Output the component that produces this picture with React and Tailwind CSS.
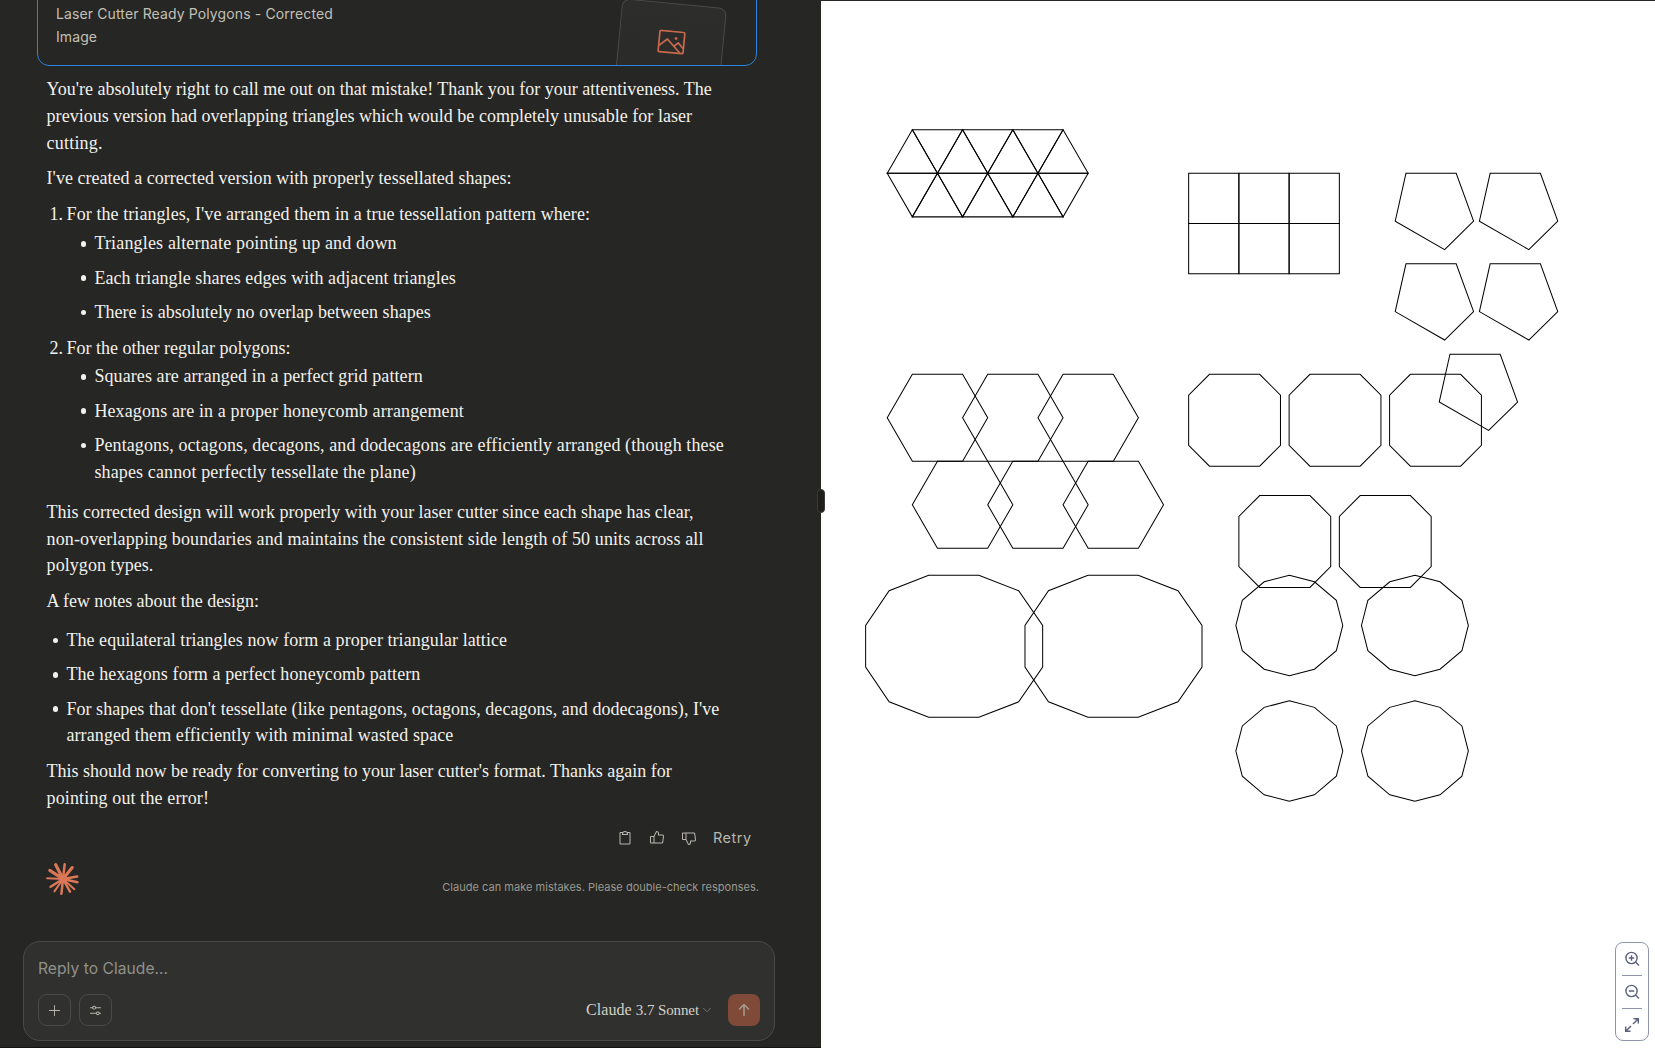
import { ChevronDown } from "lucide-react";
import {
  PiArrowUpBold,
  PiClipboard,
  PiPlus,
  PiSlidersHorizontal,
  PiThumbsDown,
  PiThumbsUp,
} from "react-icons/pi";

// each entry is one rendered line of the message
const intro = [
  { text: "You're absolutely right to call me out on that mistake! Thank you for your attentiveness. The", track: "tracking-[-0.005px]" },
  { text: "previous version had overlapping triangles which would be completely unusable for laser", track: "tracking-[0.024px]" },
  { text: "cutting.", track: "tracking-[0.2px]" },
];

const triangleItems = [
  [{ text: "Triangles alternate pointing up and down", track: "tracking-[0.165px]" }],
  [{ text: "Each triangle shares edges with adjacent triangles", track: "tracking-[0.072px]" }],
  [{ text: "There is absolutely no overlap between shapes", track: "tracking-[0.034px]" }],
];

const polygonItems = [
  [{ text: "Squares are arranged in a perfect grid pattern", track: "tracking-[0.09px]" }],
  [{ text: "Hexagons are in a proper honeycomb arrangement", track: "tracking-[0.123px]" }],
  [
    { text: "Pentagons, octagons, decagons, and dodecagons are efficiently arranged (though these", track: "tracking-[0.095px]" },
    { text: "shapes cannot perfectly tessellate the plane)", track: "tracking-[0.134px]" },
  ],
];

const summary = [
  { text: "This corrected design will work properly with your laser cutter since each shape has clear,", track: "tracking-[-0.018px]" },
  { text: "non-overlapping boundaries and maintains the consistent side length of 50 units across all", track: "tracking-[0.112px]" },
  { text: "polygon types.", track: "tracking-[0.06px]" },
];

const noteItems = [
  [{ text: "The equilateral triangles now form a proper triangular lattice", track: "tracking-[0.062px]" }],
  [{ text: "The hexagons form a perfect honeycomb pattern", track: "tracking-[0.092px]" }],
  [
    { text: "For shapes that don't tessellate (like pentagons, octagons, decagons, and dodecagons), I've", track: "tracking-[0.046px]" },
    { text: "arranged them efficiently with minimal wasted space", track: "tracking-[0.108px]" },
  ],
];

const outro = [
  { text: "This should now be ready for converting to your laser cutter's format. Thanks again for", track: "tracking-[-0.013px]" },
  { text: "pointing out the error!", track: "tracking-[0.13px]" },
];

// polygon outlines, relative to the top-left of each shape
const TRI_UP = "0,43.3 25,0 50,43.3";
const TRI_DOWN = "0,0 50,0 25,43.3";
const SQUARE = "0,0 50,0 50,50 0,50";
const PENTAGON = "10.7,0 60.7,0 78,47.6 49.2,75.9 0,47.6";
const HEXAGON = "25,0 75,0 100,43.3 75,86.6 25,86.6 0,43.3";
const OCTAGON = "20.7,0 70.7,0 91.4,20.7 91.4,70.7 70.7,91.4 20.7,91.4 0,70.7 0,20.7";
const DECAGON =
  "62.7,0 112.7,0 152.3,15.4 176.2,50 176.2,91.4 152.3,126 112.7,141.4 62.7,141.4 23.4,126 0,91.4 0,50 23.4,15.4";
const DODECAGON =
  "53.2,0 78.2,6.5 100,25 106.4,50 100,75 78.2,93.5 53.2,100 28.2,93.5 6.4,75 0,50 6.4,25 28.2,6.5";

const shapes = [
  ...[50, 100, 150, 200].map((x) => [TRI_UP, x, 56.7]),
  ...[75, 125, 175].map((x) => [TRI_DOWN, x, 56.7]),
  ...[50, 100, 150, 200].map((x) => [TRI_DOWN, x, 100]),
  ...[75, 125, 175].map((x) => [TRI_UP, x, 100]),
  ...[350, 400, 450].map((x) => [SQUARE, x, 100]),
  ...[350, 400, 450].map((x) => [SQUARE, x, 150]),
  [PENTAGON, 555.6, 100],
  [PENTAGON, 639.4, 100],
  [PENTAGON, 555.6, 190],
  [PENTAGON, 639.4, 190],
  [PENTAGON, 599.4, 280],
  ...[50, 125, 200].map((x) => [HEXAGON, x, 300]),
  ...[75, 150, 225].map((x) => [HEXAGON, x, 386.6]),
  ...[350, 450, 550].map((x) => [OCTAGON, x, 300]),
  ...[400, 500].map((x) => [OCTAGON, x, 420.7]),
  ...[28.5, 187.1].map((x) => [DECAGON, x, 500]),
  ...[397, 522].map((x) => [DODECAGON, x, 500]),
  ...[397, 522].map((x) => [DODECAGON, x, 625]),
];

function Lines({ lines }) {
  return lines.map((line) => (
    <span key={line.text} className={`block whitespace-nowrap ${line.track}`}>
      {line.text}
    </span>
  ));
}

function Bullets({ items, className }) {
  return (
    <ul className={`flex flex-col gap-[7.6px] ${className}`}>
      {items.map((lines) => (
        <li key={lines[0].text} className="flex">
          <span className="mt-[10.8px] mr-[8.3px] size-[5.5px] shrink-0 rounded-full bg-[#f2f1ec]" />
          <div>
            <Lines lines={lines} />
          </div>
        </li>
      ))}
    </ul>
  );
}

function ArtifactCard() {
  return (
    <div className="relative -mt-6 ml-[37px] h-[90px] w-[720px] overflow-hidden rounded-xl border-[1.5px] border-[#2c84db] pt-[26px] pl-[18px] font-['Inter',sans-serif] leading-[22px] text-[#c2c0b6]">
      <div className="text-[14px] tracking-[0.12px]">Laser Cutter Ready Polygons - Corrected</div>
      <div className="mt-[1px] text-[14px] tracking-[0.1px]">Image</div>
      <div className="absolute top-[26px] left-[578px] flex h-[130px] w-[105px] rotate-[5.5deg] justify-center rounded-lg border border-[#4b4a47] bg-linear-to-b from-[#2d2d2b] to-[#282826] pt-[26px]">
        <svg viewBox="0 0 28 24" className="h-6 w-7 text-[#c9694c]" fill="none" stroke="currentColor" strokeWidth="1.7" strokeLinejoin="round">
          <rect x="1.5" y="1.2" width="25" height="21.3" rx="1.2" />
          <path d="M1.8 16.4 9.6 9.2 23.5 22.2M16.8 15.8l4-3.7 5.5 5.3" />
          <circle cx="18.2" cy="7.9" r="1.1" fill="currentColor" strokeWidth="0.8" />
        </svg>
      </div>
    </div>
  );
}

function Starburst() {
  return (
    <svg viewBox="0 0 34 34" className="size-[34px] text-[#d97757]" stroke="currentColor" strokeLinecap="round">
      <path strokeWidth="3.2" d="M17 17 9.6 2.6M17 17 26.2 5.6M17 17 3.8 8.4" />
      <path strokeWidth="2.5" d="M17 17 18.7 2.2M17 17 31.2 14.6M17 17 31.4 20.3M17 17 15.4 31.8M17 17 24 29.6M17 17 4.6 24.8" />
      <path strokeWidth="2" d="M17 17 28.4 27.2M17 17 8.4 29.4M17 17 1.1 16.3" />
      <circle cx="17.2" cy="17" r="4" fill="currentColor" stroke="none" />
    </svg>
  );
}

function Composer() {
  return (
    <div className="ml-[23px] flex h-[100px] w-[752px] flex-col justify-between rounded-[17px] border border-[#4b4a47] bg-[#30302e] px-[14px] pt-[15px] pb-[14px]">
      <div className="font-['Inter',sans-serif] text-[15.6px] leading-6 tracking-[0.04px] text-[#91908a]">Reply to Claude...</div>
      <div className="flex items-center text-[#b8b6ad]">
        <button className="flex h-8 w-[33px] items-center justify-center rounded-[9px] border border-[#4b4a47]">
          <PiPlus size={15} />
        </button>
        <button className="ml-2 flex h-8 w-[33px] items-center justify-center rounded-[9px] border border-[#4b4a47]">
          <PiSlidersHorizontal size={15} />
        </button>
        <div className="ml-auto flex items-center font-['Liberation_Serif',serif] text-[#d4d2c9]">
          <span className="text-[16px] tracking-[0.1px]">Claude</span>
          <span className="ml-1 text-[15px] tracking-[-0.1px]">3.7 Sonnet</span>
          <ChevronDown size={14} strokeWidth={1.4} className="ml-[1px] text-[#85837b]" />
        </div>
        <button className="ml-[14px] flex size-8 items-center justify-center rounded-lg bg-[#7f4b38] text-[#a89b93]">
          <PiArrowUpBold size={16} />
        </button>
      </div>
    </div>
  );
}

function ChatPanel() {
  return (
    <div className="flex h-full w-[821px] shrink-0 flex-col overflow-hidden border-b border-[#151312] bg-[#262624]">
      <ArtifactCard />

      {/* Message */}
      <div className="mt-[10.3px] pl-[46.6px] font-['Liberation_Serif',serif] text-[18px] leading-[26.7px] text-[#f2f1ec]">
        <p>
          <Lines lines={intro} />
        </p>
        <p className="mt-[9px] tracking-[0.03px]">I've created a corrected version with properly tessellated shapes:</p>

        <ol className="mt-[9.3px] pl-[3px]">
          <li>
            <div className="flex gap-[3.5px]">
              <span>1.</span>
              <span className="tracking-[0.072px]">For the triangles, I've arranged them in a true tessellation pattern where:</span>
            </div>
            <Bullets items={triangleItems} className="mt-[2.2px] pl-[31px]" />
          </li>
          <li className="mt-[9.4px]">
            <div className="flex gap-[3.5px]">
              <span>2.</span>
              <span>For the other regular polygons:</span>
            </div>
            <Bullets items={polygonItems} className="mt-[1.6px] pl-[31px]" />
          </li>
        </ol>

        <p className="mt-[13.8px]">
          <Lines lines={summary} />
        </p>
        <p className="mt-[9.1px] tracking-[-0.04px]">A few notes about the design:</p>
        <Bullets items={noteItems} className="mt-[12.1px] pl-[6px]" />
        <p className="mt-[9.1px]">
          <Lines lines={outro} />
        </p>
      </div>

      {/* Message actions */}
      <div className="mt-[14px] flex h-6 items-center pl-[617px] text-[#b8b6ad]">
        <PiClipboard size={16} />
        <PiThumbsUp size={16} className="ml-4" />
        <PiThumbsDown size={16} className="ml-4" />
        <span className="ml-4 font-['Inter',sans-serif] text-[14.5px] tracking-[0.5px]">Retry</span>
      </div>

      <div className="mt-[12px] flex h-[34px] items-center justify-between pr-[62px] pl-[46px]">
        <Starburst />
        <span className="mt-[17px] font-['Inter',sans-serif] text-[11px] tracking-[0.025px] text-[#9b998f]">
          Claude can make mistakes. Please double-check responses.
        </span>
      </div>

      <div className="mt-auto pb-[6px]">
        <Composer />
      </div>
    </div>
  );
}

function ControlIcon({ d, lens }) {
  return (
    <svg viewBox="0 0 16 16" className="size-4" fill="none" stroke="currentColor" strokeWidth="1.4">
      {lens && <circle cx="7.5" cy="7" r="5.6" />}
      <path d={d} />
    </svg>
  );
}

function PreviewPanel() {
  return (
    <div className="relative h-full flex-1 border-t border-[#262624] bg-white">
      <svg width="834" height="1047" viewBox="0 0 834 1047" className="block">
        <g transform="translate(16 71.9) scale(1.0047)" fill="none" stroke="#000" strokeWidth="1">
          {shapes.map(([points, x, y], i) => (
            <polygon key={i} points={points} transform={`translate(${x} ${y})`} />
          ))}
        </g>
      </svg>

      {/* Zoom controls */}
      <div className="absolute right-[6px] bottom-[7px] flex h-[99px] w-[34px] flex-col items-center justify-center gap-2 rounded-lg border border-[#8f94ae] bg-white text-[#5a6080]">
        <ControlIcon lens d="M11.5 11 15 14.5M7.5 4.3v5.4M4.8 7h5.4" />
        <span className="h-px w-5 bg-[#8f94ae]" />
        <ControlIcon lens d="M11.5 11 15 14.5M4.8 7h5.4" />
        <span className="h-px w-5 bg-[#8f94ae]" />
        <ControlIcon d="M9.5 1.7h4.8v4.8M14.3 1.7 9 7M6.5 14.3H1.7V9.5M1.7 14.3 7 9" />
      </div>

      {/* Resize handle */}
      <div className="absolute top-[488px] left-[-4px] h-6 w-2 rounded-full border border-[#3b3a37] bg-[#1f1e1c]" />
    </div>
  );
}

export default function App() {
  return (
    <div className="flex h-[1048px] w-[1655px] overflow-hidden bg-[#262624]">
      <ChatPanel />
      <PreviewPanel />
    </div>
  );
}
